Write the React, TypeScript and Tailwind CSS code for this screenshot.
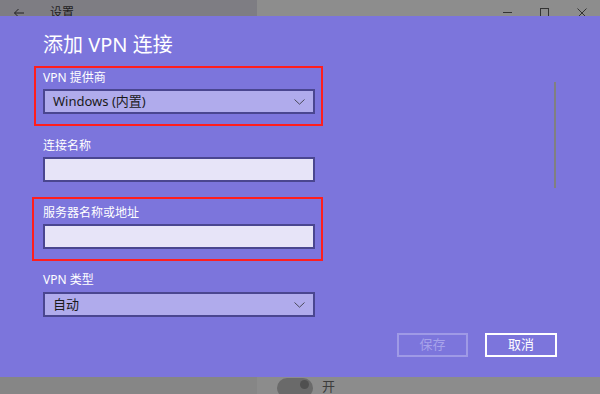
import React from "react";

const Chevron = () => (
  <svg width="11" height="6" viewBox="0 0 11 6" className="shrink-0">
    <path d="M0.5 0.5 L5.5 5.2 L10.5 0.5" fill="none" stroke="#4a4a5a" strokeWidth="1" />
  </svg>
);

const Select = ({ value }: { value: string }) => (
  <div className="flex h-[25px] w-[272px] items-center justify-between border-2 border-[#4a4690] bg-[#b0abec] pl-[8px] pr-[8px] text-[13px] leading-none text-[#1a1a1a]">
    <span>{value}</span>
    <Chevron />
  </div>
);

const Input = () => (
  <div className="h-[25px] w-[272px] border-2 border-[#4a4690] bg-[#e7e4f8]" />
);

const Label = ({ children }: { children: React.ReactNode }) => (
  <div className="h-[16px] text-[12px] leading-[16px] text-white">{children}</div>
);

export default function App() {
  return (
    <div
      className="flex h-[394px] w-[600px] flex-col overflow-hidden bg-[#7c75dc]"
      style={{ fontFamily: '"Noto Sans", "Noto Sans CJK SC", sans-serif' }}
    >
      {/* top bar */}
      <div className="flex h-[16px] shrink-0 overflow-hidden">
        <div className="flex h-[26px] w-[257px] items-center bg-[#7e7d83] text-[12px] text-[#1e1e1e]">
          <svg width="12" height="10" viewBox="0 0 12 10" className="ml-[13px]">
            <path d="M11 5 H1.5 M5.5 1 L1.5 5 L5.5 9" fill="none" stroke="#222" strokeWidth="1" />
          </svg>
          <span className="ml-[25px] leading-none">设置</span>
        </div>
        <div className="relative flex h-[26px] flex-1 items-center bg-[#8d8d8d]">
          <div className="absolute left-[246px] top-[12px] h-px w-[9px] bg-[#333]" />
          <div className="absolute left-[283px] top-[8px] h-[9px] w-[9px] border border-[#333]" />
          <svg width="10" height="10" viewBox="0 0 10 10" className="absolute left-[320px] top-[8px]">
            <path d="M0.5 0.5 L9.5 9.5 M9.5 0.5 L0.5 9.5" stroke="#333" strokeWidth="1" />
          </svg>
        </div>
      </div>

      {/* main panel */}
      <div className="relative flex flex-1 flex-col">
        <div className="ml-[43px] mt-[15px] h-[28px] text-[20px] leading-[28px] text-white">添加 VPN 连接</div>

        <div className="ml-[34px] mt-[7px] h-[60px] w-[289px] border-2 border-[#ff1e1e] pl-[7px] pt-[2px]">
          <Label>VPN 提供商</Label>
          <div className="mt-[3px]">
            <Select value="Windows (内置)" />
          </div>
        </div>

        <div className="ml-[43px] mt-[12px]">
          <Label>连接名称</Label>
          <div className="mt-[3px]">
            <Input />
          </div>
        </div>

        <div className="ml-[32px] mt-[15px] h-[64px] w-[291px] border-2 border-[#ff1e1e] pl-[9px] pt-[6px]">
          <Label>服务器名称或地址</Label>
          <div className="mt-[3px]">
            <Input />
          </div>
        </div>

        <div className="ml-[43px] mt-[11px]">
          <Label>VPN 类型</Label>
          <div className="mt-[4px]">
            <Select value="自动" />
          </div>
        </div>

        <div className="mr-[43px] mt-[16px] flex justify-end gap-[17px]">
          <div className="flex h-[24px] w-[71px] items-center justify-center border-2 border-[#9f9ae6] text-[13px] text-[#a7a2ea]">
            保存
          </div>
          <div className="flex h-[24px] w-[72px] items-center justify-center border-2 border-white text-[13px] text-white">
            取消
          </div>
        </div>

        {/* scrollbar */}
        <div className="absolute left-[554px] top-[66px] h-[106px] w-[2px] bg-[#808080]" />
      </div>

      {/* bottom bar */}
      <div className="flex h-[17px] shrink-0 overflow-hidden">
        <div className="h-full w-[257px] bg-[#868686]" />
        <div className="flex flex-1 items-start bg-[#8c8c8c]">
          <div className="relative ml-[20px] mt-[1px] h-[20px] w-[36px] rounded-full bg-[#6a6a6a]">
            <div className="absolute left-[23px] top-[2px] h-[9px] w-[9px] rounded-full bg-[#505050]" />
          </div>
          <span className="ml-[9px] mt-[1px] text-[13px] leading-[16px] text-[#3c3c3c]">开</span>
        </div>
      </div>
    </div>
  );
}
